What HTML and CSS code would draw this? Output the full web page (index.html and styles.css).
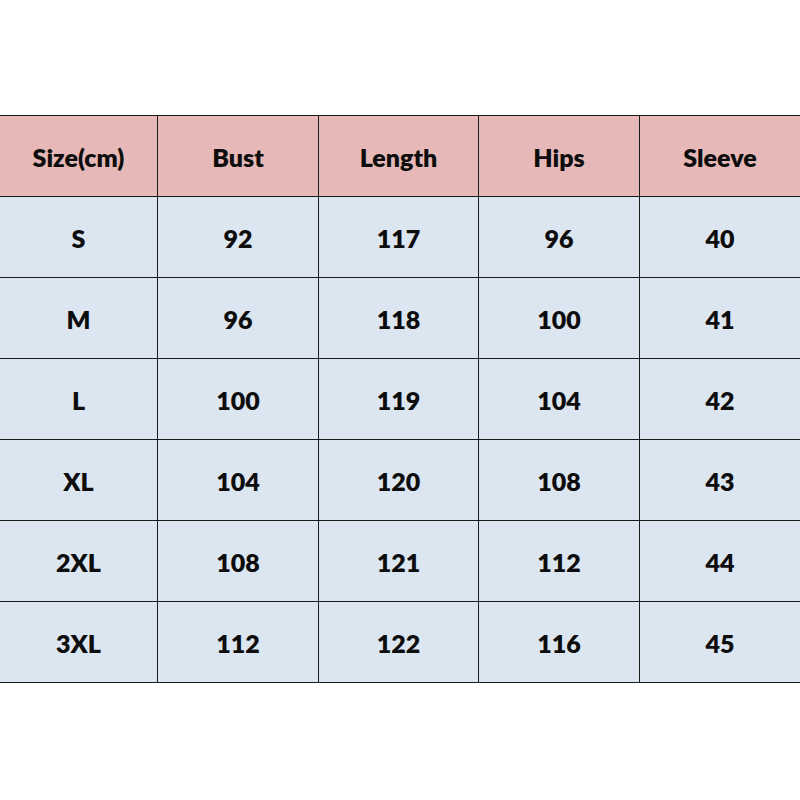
FILE: index.html
```html
<!DOCTYPE html>
<html>
<head>
<meta charset="utf-8">
<link rel="stylesheet" href="styles.css">
</head>
<body>
<div class="page">
  <div class="chart">
    <div class="cell head">Size(cm)</div>
    <div class="cell head">Bust</div>
    <div class="cell head">Length</div>
    <div class="cell head">Hips</div>
    <div class="cell head last">Sleeve</div>

    <div class="cell">S</div><div class="cell">92</div><div class="cell">117</div><div class="cell">96</div><div class="cell last">40</div>
    <div class="cell">M</div><div class="cell">96</div><div class="cell">118</div><div class="cell">100</div><div class="cell last">41</div>
    <div class="cell">L</div><div class="cell">100</div><div class="cell">119</div><div class="cell">104</div><div class="cell last">42</div>
    <div class="cell">XL</div><div class="cell">104</div><div class="cell">120</div><div class="cell">108</div><div class="cell last">43</div>
    <div class="cell">2XL</div><div class="cell">108</div><div class="cell">121</div><div class="cell">112</div><div class="cell last">44</div>
    <div class="cell">3XL</div><div class="cell">112</div><div class="cell">122</div><div class="cell">116</div><div class="cell last">45</div>
  </div>
</div>
</body>
</html>
```
FILE: styles.css
```css
html, body {
  margin: 0;
  padding: 0;
  background: #ffffff;
}
.page {
  width: 800px;
  height: 800px;
  padding-top: 115px;
  box-sizing: border-box;
}
.chart {
  display: grid;
  grid-template-columns: 158px 161px 160px 161px 160px;
  grid-auto-rows: 81px;
  border-top: 1px solid #1a1a1a;
  font-family: Lato, "Liberation Sans", sans-serif;
  font-weight: 800;
  font-size: 25px;
  color: #0d0d0d;
}
.cell {
  display: flex;
  align-items: center;
  justify-content: center;
  padding-top: 2px;
  box-sizing: border-box;
  background: #dce6f1;
  border-right: 1px solid #1a1a1a;
  border-bottom: 1px solid #1a1a1a;
}
.cell.last {
  border-right: none;
}
.cell.head {
  background: #e6b8b7;
}
```
